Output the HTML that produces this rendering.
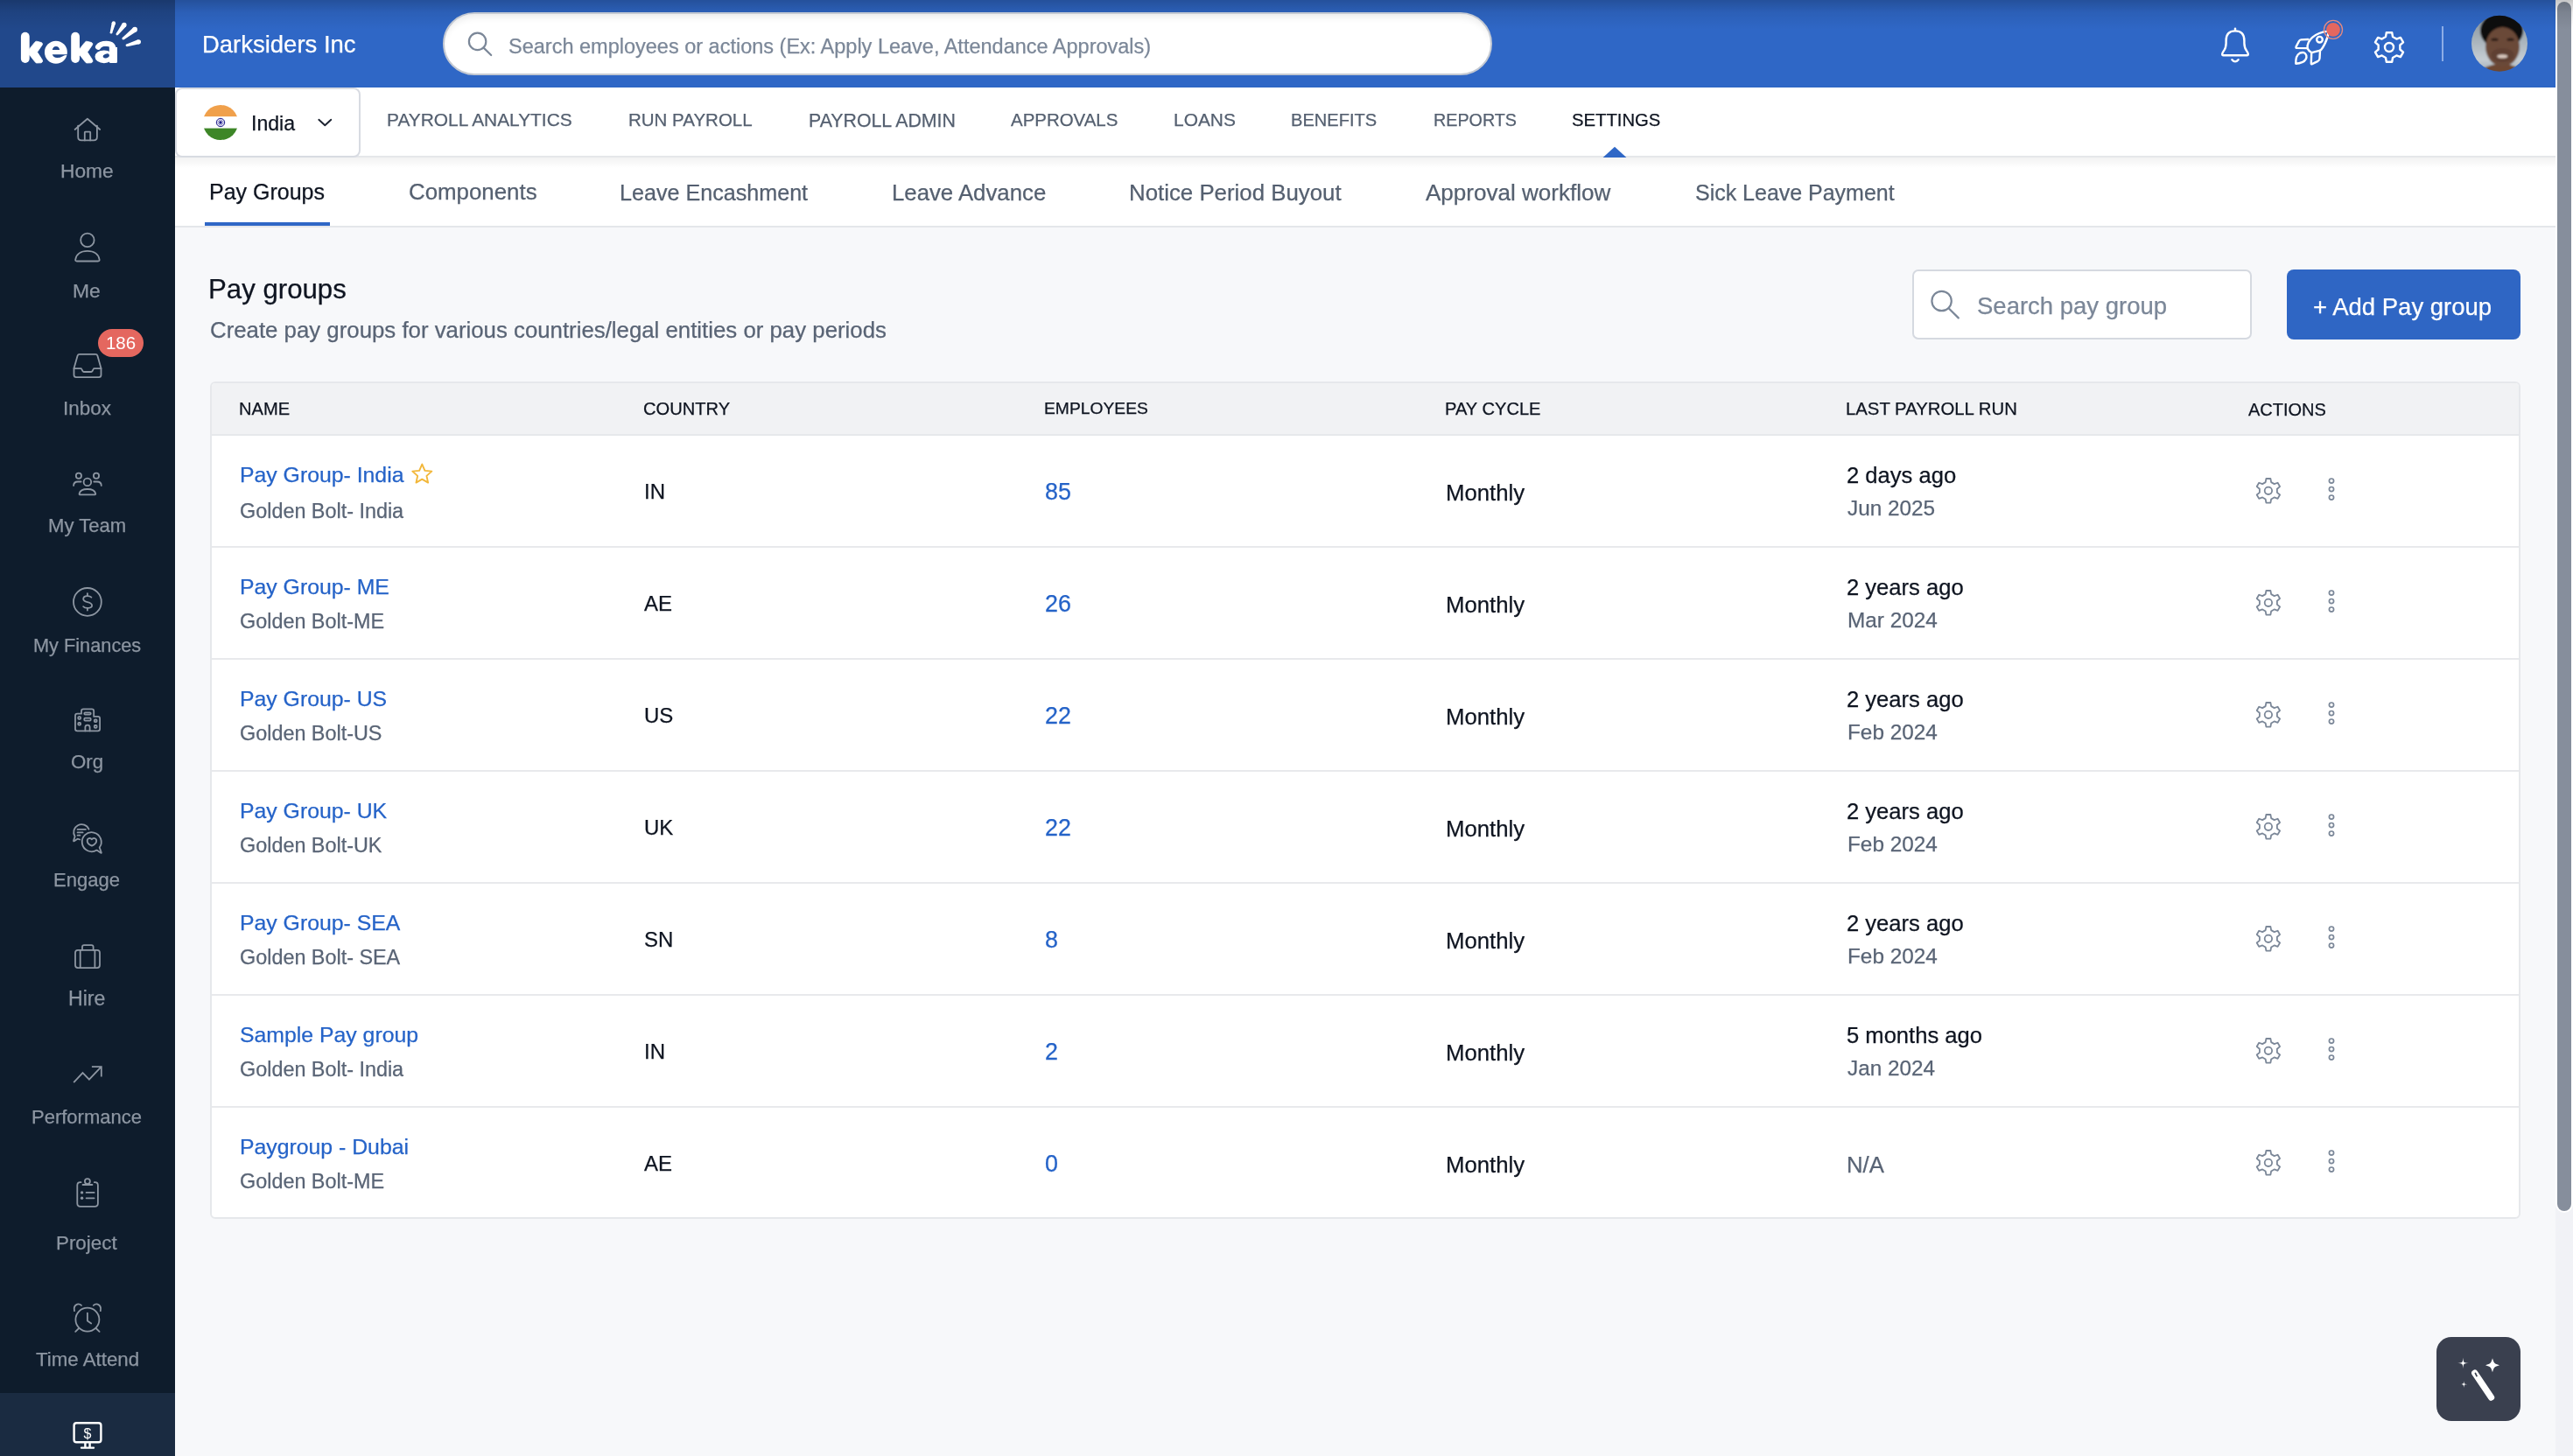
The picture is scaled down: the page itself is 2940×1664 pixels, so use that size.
<!DOCTYPE html>
<html><head><meta charset="utf-8">
<style>
html,body{margin:0;padding:0;}
body{width:2940px;height:1664px;overflow:hidden;position:relative;background:#f7f8fa;font-family:"Liberation Sans",sans-serif;}
.r{position:absolute;box-sizing:border-box;}
.t{position:absolute;will-change:transform;-webkit-text-stroke:0.25px currentColor;white-space:nowrap;line-height:1;font-family:"Liberation Sans",sans-serif;}
.badge{position:absolute;will-change:transform;left:112px;top:376px;width:52px;height:32px;border-radius:16px;background:#e4675f;color:#fff;font-size:20.5px;line-height:32px;text-align:center;font-family:"Liberation Sans",sans-serif;}
</style></head><body>
<!-- sidebar -->
<div class="r" style="left:0;top:0;width:200px;height:1664px;background:#0e1c2c"></div>
<div class="r" style="left:0;top:0;width:200px;height:100px;background:#21488b"></div>
<div class="r" style="left:0;top:1592px;width:200px;height:72px;background:#1a2b41"></div>
<!-- header -->
<div class="r" style="left:200px;top:0;width:2720px;height:100px;background:#2f67c6"></div>
<div class="r" style="left:0;top:0;width:2940px;height:34px;background:linear-gradient(rgba(0,0,0,0.22),rgba(0,0,0,0.08) 14px,rgba(0,0,0,0) 34px)"></div>
<div class="r" style="left:506px;top:14px;width:1199px;height:72px;border-radius:36px;background:#fff;border:2px solid #c4c9d2;box-shadow:inset 0 8px 9px -5px rgba(0,0,0,0.09)"></div>
<div class="r" style="left:2790px;top:30px;width:2px;height:40px;background:#8cade6"></div>
<!-- nav row -->
<div class="r" style="left:200px;top:100px;width:2720px;height:80px;background:#fff;border-bottom:2px solid #e5e7ea;box-shadow:0 4px 8px rgba(0,0,0,0.06)"></div>
<div class="r" style="left:200px;top:180px;width:2720px;height:80px;background:#fff;border-bottom:2px solid #e4e6ea"></div>
<div class="r" style="left:200px;top:180px;width:2720px;height:12px;background:linear-gradient(rgba(0,0,0,0.05),rgba(0,0,0,0))"></div>
<div class="r" style="left:200px;top:100px;width:212px;height:80px;background:#fff;border:2px solid #d8dbe2;border-radius:8px"></div>
<div class="r" style="left:234px;top:254px;width:143px;height:4px;background:#2f67c6"></div>
<!-- page head -->
<div class="r" style="left:2185px;top:308px;width:388px;height:80px;background:#fff;border:2px solid #d5d9e0;border-radius:7px"></div>
<div class="r" style="left:2613px;top:308px;width:267px;height:80px;background:#2f66c4;border-radius:8px"></div>
<!-- table -->
<div class="r" style="left:240px;top:436px;width:2640px;height:957px;background:#fff;border:2px solid #e6e8eb;border-radius:6px;overflow:hidden">
  <div class="r" style="left:0;top:0;width:2636px;height:58px;background:#f1f2f4"></div>
  <div class="r" style="left:0;top:58px;width:2636px;height:2px;background:#e6e8eb"></div>
  <div class="r" style="left:0;top:186px;width:2636px;height:2px;background:#e8e9ec"></div>
  <div class="r" style="left:0;top:314px;width:2636px;height:2px;background:#e8e9ec"></div>
  <div class="r" style="left:0;top:442px;width:2636px;height:2px;background:#e8e9ec"></div>
  <div class="r" style="left:0;top:570px;width:2636px;height:2px;background:#e8e9ec"></div>
  <div class="r" style="left:0;top:698px;width:2636px;height:2px;background:#e8e9ec"></div>
  <div class="r" style="left:0;top:826px;width:2636px;height:2px;background:#e8e9ec"></div>
</div>
<!-- fab -->
<div class="r" style="left:2784px;top:1528px;width:96px;height:96px;background:#3a404f;border-radius:17px"></div>
<!-- scrollbar -->
<div class="r" style="left:2920px;top:0;width:20px;height:1664px;background:#f1f2f6"></div>
<div class="r" style="left:2920px;top:0;width:20px;height:1386px;background:#fff;border-radius:0 0 10px 10px"></div>
<div class="r" style="left:2922px;top:2px;width:16px;height:1382px;background:#868e9c;border-radius:8px"></div>
<div class="r" style="left:2920px;top:0;width:20px;height:34px;background:linear-gradient(rgba(0,0,0,0.22),rgba(0,0,0,0.08) 14px,rgba(0,0,0,0) 34px)"></div>
<div class="t" style="left:69.20px;top:184.40px;font-size:22.75px;color:#8d96a2;">Home</div>
<div class="t" style="left:83.26px;top:321.36px;font-size:22.83px;color:#8d96a2;">Me</div>
<div class="t" style="left:71.59px;top:455.99px;font-size:22.45px;color:#8d96a2;">Inbox</div>
<div class="t" style="left:55.44px;top:590.39px;font-size:22.10px;color:#8d96a2;">My Team</div>
<div class="t" style="left:38.05px;top:726.66px;font-size:21.74px;color:#8d96a2;">My Finances</div>
<div class="t" style="left:81.24px;top:860.41px;font-size:22.28px;color:#8d96a2;">Org</div>
<div class="t" style="left:60.86px;top:995.09px;font-size:22.04px;color:#8d96a2;">Engage</div>
<div class="t" style="left:77.78px;top:1129.80px;font-size:23.13px;color:#8d96a2;">Hire</div>
<div class="t" style="left:35.87px;top:1266.02px;font-size:22.00px;color:#8d96a2;">Performance</div>
<div class="t" style="left:63.85px;top:1410.10px;font-size:22.36px;color:#8d96a2;">Project</div>
<div class="t" style="left:41.29px;top:1543.05px;font-size:22.31px;color:#8d96a2;">Time Attend</div>
<div class="t" style="left:231.36px;top:36.58px;font-size:27.48px;color:#ffffff;">Darksiders Inc</div>
<div class="t" style="left:580.85px;top:41.55px;font-size:23.50px;color:#7b8798;">Search employees or actions (Ex: Apply Leave, Attendance Approvals)</div>
<div class="t" style="left:287.48px;top:130.01px;font-size:23.08px;color:#0e1420;">India</div>
<div class="t" style="left:442.42px;top:126.66px;font-size:20.90px;color:#556070;">PAYROLL ANALYTICS</div>
<div class="t" style="left:717.76px;top:126.70px;font-size:20.50px;color:#556070;">RUN PAYROLL</div>
<div class="t" style="left:923.51px;top:127.58px;font-size:21.33px;color:#556070;">PAYROLL ADMIN</div>
<div class="t" style="left:1154.59px;top:126.72px;font-size:20.47px;color:#556070;">APPROVALS</div>
<div class="t" style="left:1340.54px;top:126.65px;font-size:20.91px;color:#556070;">LOANS</div>
<div class="t" style="left:1474.59px;top:126.78px;font-size:20.09px;color:#556070;">BENEFITS</div>
<div class="t" style="left:1637.83px;top:127.82px;font-size:19.73px;color:#556070;">REPORTS</div>
<div class="t" style="left:1796.48px;top:126.75px;font-size:20.26px;color:#0e1420;">SETTINGS</div>
<div class="t" style="left:239.26px;top:206.78px;font-size:25.01px;color:#0e1420;">Pay Groups</div>
<div class="t" style="left:467.12px;top:206.69px;font-size:25.86px;color:#556070;">Components</div>
<div class="t" style="left:708.24px;top:207.75px;font-size:25.14px;color:#556070;">Leave Encashment</div>
<div class="t" style="left:1019.11px;top:207.74px;font-size:25.77px;color:#556070;">Leave Advance</div>
<div class="t" style="left:1290.19px;top:207.73px;font-size:25.84px;color:#556070;">Notice Period Buyout</div>
<div class="t" style="left:1629.25px;top:206.71px;font-size:26.06px;color:#556070;">Approval workflow</div>
<div class="t" style="left:1937.25px;top:207.78px;font-size:24.98px;color:#556070;">Sick Leave Payment</div>
<div class="t" style="left:238.32px;top:314.61px;font-size:31.20px;color:#0e1420;">Pay groups</div>
<div class="t" style="left:239.69px;top:364.77px;font-size:25.81px;color:#596475;">Create pay groups for various countries/legal entities or pay periods</div>
<div class="t" style="left:2259.48px;top:336.20px;font-size:27.51px;color:#7b8798;">Search pay group</div>
<div class="t" style="left:2643.18px;top:336.81px;font-size:27.51px;color:#ffffff;">+ Add Pay group</div>
<div class="t" style="left:273.49px;top:457.31px;font-size:20.10px;color:#0e1420;">NAME</div>
<div class="t" style="left:735.41px;top:457.30px;font-size:20.12px;color:#0e1420;">COUNTRY</div>
<div class="t" style="left:1193.14px;top:457.36px;font-size:19.28px;color:#0e1420;">EMPLOYEES</div>
<div class="t" style="left:1650.98px;top:457.30px;font-size:20.13px;color:#0e1420;">PAY CYCLE</div>
<div class="t" style="left:2109.08px;top:457.29px;font-size:20.33px;color:#0e1420;">LAST PAYROLL RUN</div>
<div class="t" style="left:2568.51px;top:458.30px;font-size:19.99px;color:#0e1420;">ACTIONS</div>
<div class="badge">186</div>
<div class="t" style="left:274.18px;top:530.96px;font-size:24.81px;color:#2563c8;">Pay Group- India</div>
<div class="t" style="left:273.77px;top:572.57px;font-size:23.38px;color:#596475;">Golden Bolt- India</div>
<div class="t" style="left:735.63px;top:550.09px;font-size:23.99px;color:#0e1420;">IN</div>
<div class="t" style="left:1194.19px;top:549.18px;font-size:26.89px;color:#2563c8;">85</div>
<div class="t" style="left:1652.21px;top:550.55px;font-size:25.76px;color:#0e1420;">Monthly</div>
<div class="t" style="left:2110.23px;top:530.75px;font-size:25.58px;color:#0e1420;">2 days ago</div>
<div class="t" style="left:2110.52px;top:569.13px;font-size:24.34px;color:#596475;">Jun 2025</div>
<div class="t" style="left:274.18px;top:658.96px;font-size:24.81px;color:#2563c8;">Pay Group- ME</div>
<div class="t" style="left:273.77px;top:699.07px;font-size:23.38px;color:#596475;">Golden Bolt-ME</div>
<div class="t" style="left:735.63px;top:678.09px;font-size:23.99px;color:#0e1420;">AE</div>
<div class="t" style="left:1194.19px;top:677.18px;font-size:26.89px;color:#2563c8;">26</div>
<div class="t" style="left:1652.21px;top:678.55px;font-size:25.76px;color:#0e1420;">Monthly</div>
<div class="t" style="left:2110.23px;top:658.75px;font-size:25.58px;color:#0e1420;">2 years ago</div>
<div class="t" style="left:2110.52px;top:697.13px;font-size:24.34px;color:#596475;">Mar 2024</div>
<div class="t" style="left:274.18px;top:786.96px;font-size:24.81px;color:#2563c8;">Pay Group- US</div>
<div class="t" style="left:273.77px;top:827.07px;font-size:23.38px;color:#596475;">Golden Bolt-US</div>
<div class="t" style="left:735.63px;top:806.09px;font-size:23.99px;color:#0e1420;">US</div>
<div class="t" style="left:1194.19px;top:805.18px;font-size:26.89px;color:#2563c8;">22</div>
<div class="t" style="left:1652.21px;top:806.55px;font-size:25.76px;color:#0e1420;">Monthly</div>
<div class="t" style="left:2110.23px;top:786.75px;font-size:25.58px;color:#0e1420;">2 years ago</div>
<div class="t" style="left:2110.52px;top:825.13px;font-size:24.34px;color:#596475;">Feb 2024</div>
<div class="t" style="left:274.18px;top:914.96px;font-size:24.81px;color:#2563c8;">Pay Group- UK</div>
<div class="t" style="left:273.77px;top:955.07px;font-size:23.38px;color:#596475;">Golden Bolt-UK</div>
<div class="t" style="left:735.63px;top:934.09px;font-size:23.99px;color:#0e1420;">UK</div>
<div class="t" style="left:1194.19px;top:933.18px;font-size:26.89px;color:#2563c8;">22</div>
<div class="t" style="left:1652.21px;top:934.55px;font-size:25.76px;color:#0e1420;">Monthly</div>
<div class="t" style="left:2110.23px;top:914.75px;font-size:25.58px;color:#0e1420;">2 years ago</div>
<div class="t" style="left:2110.52px;top:953.13px;font-size:24.34px;color:#596475;">Feb 2024</div>
<div class="t" style="left:274.18px;top:1042.96px;font-size:24.81px;color:#2563c8;">Pay Group- SEA</div>
<div class="t" style="left:273.77px;top:1083.07px;font-size:23.38px;color:#596475;">Golden Bolt- SEA</div>
<div class="t" style="left:735.63px;top:1062.09px;font-size:23.99px;color:#0e1420;">SN</div>
<div class="t" style="left:1194.19px;top:1061.18px;font-size:26.89px;color:#2563c8;">8</div>
<div class="t" style="left:1652.21px;top:1062.55px;font-size:25.76px;color:#0e1420;">Monthly</div>
<div class="t" style="left:2110.23px;top:1042.75px;font-size:25.58px;color:#0e1420;">2 years ago</div>
<div class="t" style="left:2110.52px;top:1081.13px;font-size:24.34px;color:#596475;">Feb 2024</div>
<div class="t" style="left:274.18px;top:1170.96px;font-size:24.81px;color:#2563c8;">Sample Pay group</div>
<div class="t" style="left:273.77px;top:1211.07px;font-size:23.38px;color:#596475;">Golden Bolt- India</div>
<div class="t" style="left:735.63px;top:1190.09px;font-size:23.99px;color:#0e1420;">IN</div>
<div class="t" style="left:1194.19px;top:1189.18px;font-size:26.89px;color:#2563c8;">2</div>
<div class="t" style="left:1652.21px;top:1190.55px;font-size:25.76px;color:#0e1420;">Monthly</div>
<div class="t" style="left:2110.23px;top:1170.75px;font-size:25.58px;color:#0e1420;">5 months ago</div>
<div class="t" style="left:2110.52px;top:1209.13px;font-size:24.34px;color:#596475;">Jan 2024</div>
<div class="t" style="left:274.18px;top:1298.96px;font-size:24.81px;color:#2563c8;">Paygroup - Dubai</div>
<div class="t" style="left:273.77px;top:1339.07px;font-size:23.38px;color:#596475;">Golden Bolt-ME</div>
<div class="t" style="left:735.63px;top:1318.09px;font-size:23.99px;color:#0e1420;">AE</div>
<div class="t" style="left:1194.19px;top:1317.18px;font-size:26.89px;color:#2563c8;">0</div>
<div class="t" style="left:1652.21px;top:1318.55px;font-size:25.76px;color:#0e1420;">Monthly</div>
<div class="t" style="left:2110.23px;top:1318.55px;font-size:25.76px;color:#596475;">N/A</div>
<svg width="2940" height="1664" viewBox="0 0 2940 1664" style="position:absolute;left:0;top:0">
<defs><clipPath id="av"><circle cx="2856" cy="49.8" r="32"/></clipPath><clipPath id="fl"><circle cx="252" cy="140" r="20"/></clipPath><linearGradient id="avbg" x1="0" y1="0" x2="1" y2="0"><stop offset="0" stop-color="#b9c3cb"/><stop offset="0.5" stop-color="#8c939a"/><stop offset="1" stop-color="#aab4bd"/></linearGradient></defs>
<g fill="#fff" stroke="none">
<rect x="23.90" y="36.8" width="9.8" height="35.2" rx="4.9"/>
<path d="M33.30 56.4 L39.70 48.4 Q41.10 46.6 42.90 47.4 L47.30 48.6 Q49.30 49.6 48.30 51.2 L42.60 59.6 L48.30 68.4 Q49.50 70.4 47.10 71.8 L41.90 72 Q40.90 72 40.10 70.8 L33.30 62.2 Z" stroke="#fff" stroke-width="0.8" stroke-linejoin="round"/>
<rect x="81.20" y="36.8" width="9.8" height="35.2" rx="4.9"/>
<path d="M90.60 56.4 L97.00 48.4 Q98.40 46.6 100.20 47.4 L104.60 48.6 Q106.60 49.6 105.60 51.2 L99.90 59.6 L105.60 68.4 Q106.80 70.4 104.40 71.8 L99.20 72 Q98.20 72 97.40 70.8 L90.60 62.2 Z" stroke="#fff" stroke-width="0.8" stroke-linejoin="round"/>
<circle cx="63.9" cy="59.75" r="12.95"/>
<path d="M59.8 57.1 Q60.6 53.1 64 53.1 Q67.4 53.1 68.2 57.1 Z" fill="#21488b"/>
<path d="M59.8 62.2 H77.6 V62.7 Q73.2 62.9 71.2 64.4 Q68.6 66.1 65.2 66 Q60.9 65.8 59.8 62.2 Z" fill="#21488b"/>
<path d="M112.2 53.6 C114.6 50.2 118 49.9 121.6 49.9 C127.6 49.9 129.6 52.8 129.6 57.6" fill="none" stroke="#fff" stroke-width="6.4" stroke-linecap="round"/>
<path d="M124.8 54 H134 V70.6 Q134 72.1 132.5 72.1 H126.3 Q124.8 72.1 124.8 70.6 Z"/>
<ellipse cx="118.9" cy="64.8" rx="10.4" ry="7.35"/>
<path d="M115.4 57.2 Q116.6 53.1 120 53.1 Q123.8 53.1 124.6 56.6 Q120 56.4 115.4 57.2 Z" fill="#21488b"/>
<ellipse cx="121.3" cy="63.9" rx="3.7" ry="2.35" transform="rotate(-18 121.3 63.9)" fill="#21488b"/>
<path d="M127.82 25.84 L125.74 36.86 L128.26 37.54 L131.98 26.96 Z"/><circle cx="129.90" cy="26.40" r="2.15"/><circle cx="127.00" cy="37.20" r="1.30"/>
<path d="M139.75 26.86 L132.77 38.31 L134.83 39.89 L144.05 30.14 Z"/><circle cx="141.90" cy="28.50" r="2.70"/><circle cx="133.80" cy="39.10" r="1.30"/>
<path d="M152.31 31.42 L139.94 43.00 L141.66 45.20 L155.89 35.98 Z"/><circle cx="154.10" cy="33.70" r="2.90"/><circle cx="140.80" cy="44.10" r="1.40"/>
<path d="M157.66 45.31 L144.60 50.46 L145.40 53.14 L159.14 50.29 Z"/><circle cx="158.40" cy="47.80" r="2.60"/><circle cx="145.00" cy="51.80" r="1.40"/>
</g>
<g fill="none" stroke="#8d96a2" stroke-width="1.8" stroke-linecap="round" stroke-linejoin="round">
<path d="M85.6 148 L99.9 135.8 L114.2 148"/>
<path d="M89.2 143.6 V156.6 Q89.2 160.4 93 160.4 H107.1 Q110.9 160.4 110.9 156.6 V143.6"/>
<path d="M96.8 160.4 V151.2 Q96.8 150.6 97.4 150.6 H102.6 Q103.2 150.6 103.2 151.2 V160.4"/>
<circle cx="99.9" cy="274.4" r="7.7"/>
<path d="M87.8 298.5 H112 Q113.9 298.5 113.6 296.6 C112.6 290.6 107.5 286.9 99.9 286.9 C92.3 286.9 87.2 290.6 86.2 296.6 Q85.9 298.5 87.8 298.5 Z"/>
<path d="M84.5 421 L88.6 406.6 Q89.1 404.8 90.9 404.8 H109.1 Q110.9 404.8 111.4 406.6 L115.5 421 V428.6 Q115.5 431.2 112.9 431.2 H87.1 Q84.5 431.2 84.5 428.6 Z"/>
<path d="M84.5 421.1 H92.3 Q93 421.1 93.3 421.8 L94.6 424.3 Q95 425 95.8 425 H104.2 Q105 425 105.4 424.3 L106.7 421.8 Q107 421.1 107.7 421.1 H115.5"/>
<circle cx="99.9" cy="550.9" r="4.3"/>
<path d="M91.6 565.3 H108.4 Q109.4 565.3 109.2 564.2 C108.4 560.6 104.8 559 99.9 559 C95 559 91.4 560.6 90.6 564.2 Q90.4 565.3 91.6 565.3 Z"/>
<circle cx="89.9" cy="543.7" r="3.1"/>
<circle cx="110" cy="543.7" r="3.1"/>
<path d="M84.1 554.9 Q84.2 550.5 89 550.5 H92.6"/>
<path d="M115.8 554.9 Q115.7 550.5 110.9 550.5 H107.3"/>
<circle cx="99.9" cy="687.9" r="15.9"/>
<path d="M104.4 682.6 Q102.8 681.1 99.9 681.1 Q95.2 681.1 95.2 684.5 Q95.2 687.1 99.9 688.1 Q105.1 689.3 105.1 692 Q105.1 694.9 99.9 694.9 Q96.6 694.9 95.2 693.2"/>
<path d="M99.9 678.2 V681 M99.9 695 V697.6"/>
<path d="M86 833.1 V818 Q86 815.7 88.3 815.7 H93 V812.7 Q93 810.4 95.3 810.4 H104.9 Q107.2 810.4 107.2 812.7 V818.9 H111.8 Q114.1 818.9 114.1 821.2 V833.1 Q114.1 835.4 111.8 835.4 H88.3 Q86 835.4 86 833.1 Z"/>
<rect x="96.3" y="814.3" width="7.4" height="2.3" rx="1"/>
<rect x="96.3" y="820.7" width="7.4" height="2.9" rx="1"/>
<rect x="89.3" y="819.2" width="2.8" height="2.6" rx="0.8"/>
<rect x="89.3" y="826" width="2.8" height="2.6" rx="0.8"/>
<rect x="107.8" y="822.5" width="2.8" height="2.6" rx="0.8"/>
<rect x="107.8" y="829" width="2.8" height="2.8" rx="0.8"/>
<path d="M97.4 835.4 V831.1 Q97.4 828.6 100 828.6 Q102.6 828.6 102.6 831.1 V835.4"/>
<path d="M101.5 947.7 A9 9 0 1 0 85.6 956 L84.1 960.6 Q83.8 961.6 84.8 961.2 L88.6 958.7 L91.3 959.5"/>
<path d="M88.6 947.9 H97.9 M88.6 951.4 H94.6 M88.6 954.7 H91.4"/>
<path d="M110.5 971.6 A11 11 0 1 1 113.7 968.6 L115.8 974.3 Q116 975 115.3 974.7 Z"/>
<path d="M104.9 959.3 C103.6 957.3 99.7 957.5 99.7 960.9 C99.7 963.5 102.6 965.6 104.9 966.6 C107.2 965.6 110.2 963.5 110.2 960.9 C110.2 957.5 106.2 957.3 104.9 959.3 Z"/>
<rect x="86" y="1085.8" width="28" height="20.3" rx="3"/>
<path d="M94 1085.8 V1082.2 Q94 1080.1 96.1 1080.1 H104.5 Q106.6 1080.1 106.6 1082.2 V1085.8"/>
<path d="M91.7 1085.8 V1106.1 M108.4 1085.8 V1106.1"/>
<path d="M84.2 1237.1 L94.5 1226.1 L101.9 1233.7 L115.5 1219.3" stroke-linecap="butt" stroke-linejoin="miter"/>
<path d="M104.9 1219.1 H115.8 V1230.5" stroke-linecap="butt" stroke-linejoin="miter"/>
<path d="M92.5 1351.2 H91.8 Q88.3 1351.2 88.3 1354.7 V1375.3 Q88.3 1378.8 91.8 1378.8 H108.4 Q111.9 1378.8 111.9 1375.3 V1354.7 Q111.9 1351.2 108.4 1351.2 H107.8"/>
<circle cx="99.9" cy="1350.1" r="3.0"/>
<path d="M94.6 1353.9 H105.4" stroke-width="2"/>
<path d="M98.6 1362.9 H107.6 M98.6 1369.3 H107.6"/>
<circle cx="99.9" cy="1508.1" r="13.5"/>
<path d="M85 1498.2 Q83.6 1492.4 88.2 1490.6 Q90.9 1489.8 93 1491.8"/>
<path d="M114.8 1498.2 Q116.2 1492.4 111.6 1490.6 Q108.9 1489.8 106.8 1491.8"/>
<path d="M90.2 1518 L86.2 1521.8 M109.6 1518 L113.6 1521.8"/>
<path d="M99.9 1500.6 V1509.6 L104.2 1512.6"/>
</g>
<g fill="#8d96a2"><circle cx="93.6" cy="1362.9" r="1.7"/><circle cx="93.6" cy="1369.3" r="1.7"/></g>
<g fill="none" stroke="#ffffff" stroke-width="2.4" stroke-linecap="round" stroke-linejoin="round">
<rect x="84.6" y="1626.2" width="30.8" height="22" rx="2.8"/>
<path d="M93 1654.6 H107 M97.4 1648.6 V1654.6 M102.6 1648.6 V1654.6"/>
</g>
<text x="100" y="1644.2" text-anchor="middle" font-family="Liberation Sans" font-size="16" fill="#fff">$</text>
<g fill="none" stroke="#7b8798" stroke-width="2.2" stroke-linecap="round">
<circle cx="545.6" cy="47.4" r="9.7"/><path d="M552.6 54.6 L561.2 63"/>
<circle cx="2218.6" cy="344" r="11.2"/><path d="M2226.6 352.2 L2237.8 363.4"/>
</g>
<g fill="none" stroke="#fff" stroke-width="2.4" stroke-linecap="round" stroke-linejoin="round">
<path d="M2554 32.6 V35"/>
<path d="M2540.4 63.2 Q2539.2 63.2 2539.2 61.8 Q2539.2 60.6 2540.6 58.6 Q2543.6 54.6 2543.6 49.4 V46.4 Q2543.6 35.4 2554 35.4 Q2564.4 35.4 2564.4 46.4 V49.4 Q2564.4 54.6 2567.4 58.6 Q2568.8 60.6 2568.8 61.8 Q2568.8 63.2 2567.6 63.2 Z"/>
<path d="M2550.4 68.2 Q2554 72.6 2557.6 68.2"/>
<path d="M2636.6 55.4 C2635.6 47 2644 37 2660.8 35.6 C2660 46 2653 56.5 2651.2 57.6 L2641.4 60.2 Q2638.2 58.6 2636.6 55.4 Z"/>
<circle cx="2650.5" cy="45.2" r="3.3"/>
<path d="M2637.4 45.0 L2629.4 45.4 Q2627.6 45.6 2626.8 47.2 L2623.6 53.4 Q2623 54.8 2624.6 54.9 L2636.4 55.1"/>
<path d="M2641.2 60.4 L2640.8 72.4 Q2640.8 73.6 2641.9 73.1 L2648.6 69.8 Q2650.4 68.8 2650.5 66.8 L2651.0 57.8"/>
<path d="M2623.3 72.7 Q2622.9 63.4 2627.8 60.7 Q2633.4 58.3 2635.3 63.4 Q2636.4 68.2 2630.5 71.2 Q2627.4 72.6 2623.3 72.7 Z"/>
</g>
<circle cx="2666" cy="33.9" r="10.5" fill="none" stroke="#e68a80" stroke-width="1.3"/>
<circle cx="2666" cy="33.9" r="7.9" fill="#e5675f"/>
<path d="M2734.02 42.06 L2733.19 37.30 L2726.81 37.30 L2725.98 42.06 L2721.67 44.55 L2717.13 42.89 L2713.95 48.41 L2717.65 51.51 L2717.65 56.49 L2713.95 59.59 L2717.13 65.11 L2721.67 63.45 L2725.98 65.94 L2726.81 70.70 L2733.19 70.70 L2734.02 65.94 L2738.33 63.45 L2742.87 65.11 L2746.05 59.59 L2742.35 56.49 L2742.35 51.51 L2746.05 48.41 L2742.87 42.89 L2738.33 44.55 Z" fill="none" stroke="#fff" stroke-width="2.4" stroke-linejoin="round"/>
<circle cx="2730" cy="54" r="5.0" fill="none" stroke="#fff" stroke-width="2.4"/>
<defs><filter id="avb" x="-10%" y="-10%" width="120%" height="120%"><feGaussianBlur stdDeviation="0.9"/></filter><linearGradient id="avg2" x1="0" y1="0" x2="0" y2="1"><stop offset="0" stop-color="#7f8b95"/><stop offset="0.45" stop-color="#a8b3bb"/><stop offset="0.75" stop-color="#c5cdd3"/><stop offset="1" stop-color="#9aa5ae"/></linearGradient></defs>
<g clip-path="url(#av)"><g filter="url(#avb)">
<rect x="2820" y="14" width="72" height="72" fill="url(#avg2)"/>
<ellipse cx="2858" cy="88" rx="27" ry="15" fill="#6d4732"/>
<ellipse cx="2858.5" cy="35" rx="24.5" ry="21" fill="#0f0c0b"/>
<ellipse cx="2859.5" cy="53.5" rx="19.4" ry="22.5" fill="#6a4839"/>
<ellipse cx="2859.5" cy="63" rx="13" ry="8" fill="#5f3f33"/>
<path d="M2840 33 Q2858 22 2878 33 L2878 26 L2840 26 Z" fill="#0f0c0b"/>
<ellipse cx="2850.5" cy="45.2" rx="4.2" ry="1.6" fill="#2a1b15"/><ellipse cx="2868.5" cy="45.2" rx="4.2" ry="1.6" fill="#2a1b15"/>
<ellipse cx="2859.3" cy="64.4" rx="6" ry="2.2" fill="#d8c8be"/>
</g></g>
<g clip-path="url(#fl)"><rect x="230" y="118" width="44" height="15.4" fill="#f0a04b"/><rect x="230" y="133.4" width="44" height="13.2" fill="#ffffff"/><rect x="230" y="146.6" width="44" height="16" fill="#3d8627"/></g>
<circle cx="252" cy="140" r="4.7" fill="none" stroke="#1f1d8c" stroke-width="1.0"/><circle cx="252" cy="140" r="1.4" fill="#1f1d8c"/>
<path d="M253.20 140.00 L256.40 140.00 M253.04 140.60 L255.81 142.20 M252.60 141.04 L254.20 143.81 M252.00 141.20 L252.00 144.40 M251.40 141.04 L249.80 143.81 M250.96 140.60 L248.19 142.20 M250.80 140.00 L247.60 140.00 M250.96 139.40 L248.19 137.80 M251.40 138.96 L249.80 136.19 M252.00 138.80 L252.00 135.60 M252.60 138.96 L254.20 136.19 M253.04 139.40 L255.81 137.80" stroke="#1f1d8c" stroke-width="0.5"/>
<path d="M364.3 136.8 L371.3 143.3 L378.3 136.8" fill="none" stroke="#1b2230" stroke-width="1.9" stroke-linecap="round" stroke-linejoin="round"/>
<path d="M1831.6 180 L1845 167.8 L1858.4 180 Z" fill="#2f67c6"/>
<path d="M482.30 530.60 L479.13 537.83 L471.27 538.62 L477.16 543.87 L475.48 551.58 L482.30 547.60 L489.12 551.58 L487.44 543.87 L493.33 538.62 L485.47 537.83 Z" fill="none" stroke="#f2b73a" stroke-width="1.9" stroke-linejoin="round"/>
<path d="M2595.15 551.13 L2594.38 547.02 L2589.42 547.02 L2588.65 551.13 L2585.15 553.15 L2581.21 551.76 L2578.73 556.06 L2581.90 558.78 L2581.90 562.82 L2578.73 565.54 L2581.21 569.84 L2585.15 568.45 L2588.65 570.47 L2589.42 574.58 L2594.38 574.58 L2595.15 570.47 L2598.65 568.45 L2602.59 569.84 L2605.07 565.54 L2601.90 562.82 L2601.90 558.78 L2605.07 556.06 L2602.59 551.76 L2598.65 553.15 Z" fill="none" stroke="#7b8798" stroke-width="1.8" stroke-linejoin="round"/>
<circle cx="2591.9" cy="560.8" r="4.2" fill="none" stroke="#7b8798" stroke-width="1.8"/>
<circle cx="2664" cy="549.6" r="2.6" fill="none" stroke="#7b8798" stroke-width="1.7"/>
<circle cx="2664" cy="559.1" r="2.6" fill="none" stroke="#7b8798" stroke-width="1.7"/>
<circle cx="2664" cy="568.6" r="2.6" fill="none" stroke="#7b8798" stroke-width="1.7"/>
<path d="M2595.15 679.13 L2594.38 675.02 L2589.42 675.02 L2588.65 679.13 L2585.15 681.15 L2581.21 679.76 L2578.73 684.06 L2581.90 686.78 L2581.90 690.82 L2578.73 693.54 L2581.21 697.84 L2585.15 696.45 L2588.65 698.47 L2589.42 702.58 L2594.38 702.58 L2595.15 698.47 L2598.65 696.45 L2602.59 697.84 L2605.07 693.54 L2601.90 690.82 L2601.90 686.78 L2605.07 684.06 L2602.59 679.76 L2598.65 681.15 Z" fill="none" stroke="#7b8798" stroke-width="1.8" stroke-linejoin="round"/>
<circle cx="2591.9" cy="688.8" r="4.2" fill="none" stroke="#7b8798" stroke-width="1.8"/>
<circle cx="2664" cy="677.6" r="2.6" fill="none" stroke="#7b8798" stroke-width="1.7"/>
<circle cx="2664" cy="687.1" r="2.6" fill="none" stroke="#7b8798" stroke-width="1.7"/>
<circle cx="2664" cy="696.6" r="2.6" fill="none" stroke="#7b8798" stroke-width="1.7"/>
<path d="M2595.15 807.13 L2594.38 803.02 L2589.42 803.02 L2588.65 807.13 L2585.15 809.15 L2581.21 807.76 L2578.73 812.06 L2581.90 814.78 L2581.90 818.82 L2578.73 821.54 L2581.21 825.84 L2585.15 824.45 L2588.65 826.47 L2589.42 830.58 L2594.38 830.58 L2595.15 826.47 L2598.65 824.45 L2602.59 825.84 L2605.07 821.54 L2601.90 818.82 L2601.90 814.78 L2605.07 812.06 L2602.59 807.76 L2598.65 809.15 Z" fill="none" stroke="#7b8798" stroke-width="1.8" stroke-linejoin="round"/>
<circle cx="2591.9" cy="816.8" r="4.2" fill="none" stroke="#7b8798" stroke-width="1.8"/>
<circle cx="2664" cy="805.6" r="2.6" fill="none" stroke="#7b8798" stroke-width="1.7"/>
<circle cx="2664" cy="815.1" r="2.6" fill="none" stroke="#7b8798" stroke-width="1.7"/>
<circle cx="2664" cy="824.6" r="2.6" fill="none" stroke="#7b8798" stroke-width="1.7"/>
<path d="M2595.15 935.13 L2594.38 931.02 L2589.42 931.02 L2588.65 935.13 L2585.15 937.15 L2581.21 935.76 L2578.73 940.06 L2581.90 942.78 L2581.90 946.82 L2578.73 949.54 L2581.21 953.84 L2585.15 952.45 L2588.65 954.47 L2589.42 958.58 L2594.38 958.58 L2595.15 954.47 L2598.65 952.45 L2602.59 953.84 L2605.07 949.54 L2601.90 946.82 L2601.90 942.78 L2605.07 940.06 L2602.59 935.76 L2598.65 937.15 Z" fill="none" stroke="#7b8798" stroke-width="1.8" stroke-linejoin="round"/>
<circle cx="2591.9" cy="944.8" r="4.2" fill="none" stroke="#7b8798" stroke-width="1.8"/>
<circle cx="2664" cy="933.6" r="2.6" fill="none" stroke="#7b8798" stroke-width="1.7"/>
<circle cx="2664" cy="943.1" r="2.6" fill="none" stroke="#7b8798" stroke-width="1.7"/>
<circle cx="2664" cy="952.6" r="2.6" fill="none" stroke="#7b8798" stroke-width="1.7"/>
<path d="M2595.15 1063.13 L2594.38 1059.02 L2589.42 1059.02 L2588.65 1063.13 L2585.15 1065.15 L2581.21 1063.76 L2578.73 1068.06 L2581.90 1070.78 L2581.90 1074.82 L2578.73 1077.54 L2581.21 1081.84 L2585.15 1080.45 L2588.65 1082.47 L2589.42 1086.58 L2594.38 1086.58 L2595.15 1082.47 L2598.65 1080.45 L2602.59 1081.84 L2605.07 1077.54 L2601.90 1074.82 L2601.90 1070.78 L2605.07 1068.06 L2602.59 1063.76 L2598.65 1065.15 Z" fill="none" stroke="#7b8798" stroke-width="1.8" stroke-linejoin="round"/>
<circle cx="2591.9" cy="1072.8" r="4.2" fill="none" stroke="#7b8798" stroke-width="1.8"/>
<circle cx="2664" cy="1061.6" r="2.6" fill="none" stroke="#7b8798" stroke-width="1.7"/>
<circle cx="2664" cy="1071.1" r="2.6" fill="none" stroke="#7b8798" stroke-width="1.7"/>
<circle cx="2664" cy="1080.6" r="2.6" fill="none" stroke="#7b8798" stroke-width="1.7"/>
<path d="M2595.15 1191.13 L2594.38 1187.02 L2589.42 1187.02 L2588.65 1191.13 L2585.15 1193.15 L2581.21 1191.76 L2578.73 1196.06 L2581.90 1198.78 L2581.90 1202.82 L2578.73 1205.54 L2581.21 1209.84 L2585.15 1208.45 L2588.65 1210.47 L2589.42 1214.58 L2594.38 1214.58 L2595.15 1210.47 L2598.65 1208.45 L2602.59 1209.84 L2605.07 1205.54 L2601.90 1202.82 L2601.90 1198.78 L2605.07 1196.06 L2602.59 1191.76 L2598.65 1193.15 Z" fill="none" stroke="#7b8798" stroke-width="1.8" stroke-linejoin="round"/>
<circle cx="2591.9" cy="1200.8" r="4.2" fill="none" stroke="#7b8798" stroke-width="1.8"/>
<circle cx="2664" cy="1189.6" r="2.6" fill="none" stroke="#7b8798" stroke-width="1.7"/>
<circle cx="2664" cy="1199.1" r="2.6" fill="none" stroke="#7b8798" stroke-width="1.7"/>
<circle cx="2664" cy="1208.6" r="2.6" fill="none" stroke="#7b8798" stroke-width="1.7"/>
<path d="M2595.15 1319.13 L2594.38 1315.02 L2589.42 1315.02 L2588.65 1319.13 L2585.15 1321.15 L2581.21 1319.76 L2578.73 1324.06 L2581.90 1326.78 L2581.90 1330.82 L2578.73 1333.54 L2581.21 1337.84 L2585.15 1336.45 L2588.65 1338.47 L2589.42 1342.58 L2594.38 1342.58 L2595.15 1338.47 L2598.65 1336.45 L2602.59 1337.84 L2605.07 1333.54 L2601.90 1330.82 L2601.90 1326.78 L2605.07 1324.06 L2602.59 1319.76 L2598.65 1321.15 Z" fill="none" stroke="#7b8798" stroke-width="1.8" stroke-linejoin="round"/>
<circle cx="2591.9" cy="1328.8" r="4.2" fill="none" stroke="#7b8798" stroke-width="1.8"/>
<circle cx="2664" cy="1317.6" r="2.6" fill="none" stroke="#7b8798" stroke-width="1.7"/>
<circle cx="2664" cy="1327.1" r="2.6" fill="none" stroke="#7b8798" stroke-width="1.7"/>
<circle cx="2664" cy="1336.6" r="2.6" fill="none" stroke="#7b8798" stroke-width="1.7"/>
<g fill="#fff">
<path d="M2848.00 1552.30 C2849.90 1558.40 2849.90 1558.40 2856.00 1560.30 C2849.90 1562.20 2849.90 1562.20 2848.00 1568.30 C2846.10 1562.20 2846.10 1562.20 2840.00 1560.30 C2846.10 1558.40 2846.10 1558.40 2848.00 1552.30 Z"/>
<path d="M2814.40 1551.40 C2814.90 1557.30 2814.90 1557.30 2820.80 1557.80 C2814.90 1558.30 2814.90 1558.30 2814.40 1564.20 C2813.90 1558.30 2813.90 1558.30 2808.00 1557.80 C2813.90 1557.30 2813.90 1557.30 2814.40 1551.40 Z"/>
<path d="M2815.30 1578.20 C2815.70 1581.70 2815.70 1581.70 2819.20 1582.10 C2815.70 1582.50 2815.70 1582.50 2815.30 1586.00 C2814.90 1582.50 2814.90 1582.50 2811.40 1582.10 C2814.90 1581.70 2814.90 1581.70 2815.30 1578.20 Z"/>
</g>
<path d="M2827.8 1569.2 L2846.5 1597.0" stroke="#fff" stroke-width="7.4" stroke-linecap="round"/>
<path d="M2828.4 1569.4 L2830.0 1572.6" stroke="#3a404f" stroke-width="1.7" stroke-linecap="round"/>
</svg>
</body></html>
